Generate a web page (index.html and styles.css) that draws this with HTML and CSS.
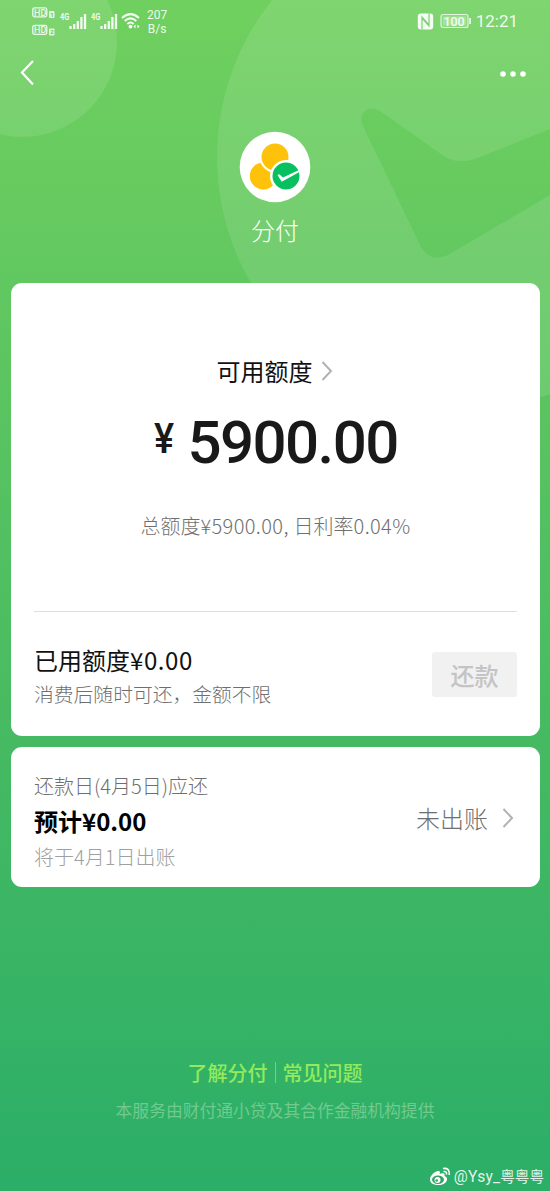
FILE: index.html
```html
<!DOCTYPE html>
<html lang="zh-CN">
<head>
<meta charset="utf-8">
<title>分付</title>
<link rel="stylesheet" href="styles.css">
</head>
<body>
<div class="screen">
  <svg class="backdrop" width="550" height="420" viewBox="0 0 550 420">
    <g fill="#fff" fill-opacity=".105">
      <circle cx="22" cy="42" r="95"/>
      <path fill-rule="evenodd" d="M217 157a251 251 0 0 1 502 0a251 251 0 0 1-502 0ZM380 111L438 152Q454 166 475 159L550 129V195L448 255Q431 263 421 247L363 126C357 112 369 105 380 111Z"/>
    </g>
  </svg>

  <header class="status">
    <div class="status-left">
      <svg width="24" height="30" viewBox="0 0 24 30">
        <g fill="none" stroke="#fff" stroke-opacity=".85" stroke-width="1.3"><rect x=".8" y=".8" width="14" height="9" rx="1.8"/><rect x=".8" y="18.3" width="14" height="9" rx="1.8"/></g>
        <g fill="#fff" fill-opacity=".8"><rect x="17" y="4" width="5.5" height="7" rx="1"/><rect x="17" y="21.5" width="5.5" height="7" rx="1"/></g>
        <g class="hd"><text x="2" y="8.6">HD</text><text x="2" y="26.1">HD</text></g>
        <g class="sim"><text x="18.2" y="9.7">1</text><text x="18.2" y="27.2">2</text></g>
      </svg>
      <svg width="28" height="20" viewBox="0 0 28 20">
        <text class="net" transform="scale(.78 1)" x="0" y="8.5">4G</text>
        <path d="M10.5 15v3M14.2 13v5M17.8 10v8M21.4 6v12M25 3v15" stroke="#fff" stroke-opacity=".9" stroke-width="2.3"/>
      </svg>
      <svg class="signal-two" width="28" height="20" viewBox="0 0 28 20">
        <text class="net" transform="scale(.78 1)" x="0" y="8.5">4G</text>
        <path d="M10.5 15v3M14.2 13v5M17.8 10v8M21.4 6v12M25 3v15" stroke="#fff" stroke-opacity=".9" stroke-width="2.3"/>
      </svg>
      <svg class="wifi" width="20" height="18" viewBox="0 0 20 18">
        <g fill="none" stroke="#fff" stroke-opacity=".9" stroke-width="2"><path d="M1 6Q9.5-1.8 18 6M3.7 9Q9.5 3.8 15.3 9M6.3 11.9Q9.5 9 12.7 11.9"/></g>
        <circle cx="9.5" cy="14.6" r="1.9" fill="#fff"/><path d="M12.5 14.5l2-2v4zM18.5 14.5l-2-2v4z" fill="#fff"/>
      </svg>
      <div class="speed"><span>207</span><span>B/s</span></div>
    </div>
    <div class="status-right">
      <svg width="17" height="17" viewBox="0 0 17 17"><rect x=".8" y=".5" width="15.4" height="16" rx="3" fill="#fff" fill-opacity=".92"/><path d="M5 16.5V4L11.500 11.500M12 .5V13L5.500 5.500" fill="none" stroke="#78d26c" stroke-width="1.2"/></svg>
      <svg class="battery" width="32" height="16" viewBox="0 0 32 16"><rect x="1" y="1.5" width="27" height="13" rx="2" fill="#fff" fill-opacity=".12" stroke="#fff" stroke-opacity=".75" stroke-width="1.2"/><rect x="3" y="3.5" width="23" height="9" fill="#fff" fill-opacity=".22"/><rect x="29.2" y="5" width="1.8" height="6" fill="#fff" fill-opacity=".8"/><text x="3.400" y="12.5">100</text></svg>
      <time>12:21</time>
    </div>
  </header>

  <nav class="nav">
    <svg width="18" height="28" viewBox="0 0 18 28"><path d="M14 2L3 13.5L14 25.5" fill="none" stroke="#fff" stroke-width="2.2"/></svg>
    <svg width="28" height="8" viewBox="0 0 28 8" fill="#fff"><circle cx="4" cy="4" r="2.8"/><circle cx="14" cy="4" r="2.8"/><circle cx="24" cy="4" r="2.8"/></svg>
  </nav>

  <section class="brand">
    <svg width="72" height="72" viewBox="0 0 72 72">
      <circle cx="36" cy="36" r="35.3" fill="#fff"/>
      <circle cx="24.3" cy="45" r="13.5" fill="#ffc20a"/>
      <circle cx="36" cy="26" r="15.5" fill="#fff"/><circle cx="36" cy="26" r="13.5" fill="#ffc20a"/>
      <circle cx="47" cy="45" r="16" fill="#fff"/><circle cx="47" cy="45" r="13.5" fill="#07c160"/>
      <path d="M38.5 44L42.7 50.7L60 41.3L60 39L44 46.5L40.2 43.2Z" fill="#fff"/>
    </svg>
    <h1>分付</h1>
  </section>

  <main class="cards">
    <section class="card credit">
      <div class="credit-title">可用额度<svg width="12" height="22" viewBox="0 0 12 22"><path d="M1.5 3L10 12L1.5 21" fill="none" stroke="#b2b2b2" stroke-width="2"/></svg></div>
      <div class="amount"><span class="yen">¥</span><span class="digits">5900.00</span></div>
      <p class="total">总额度<span class="num">¥5900.00, </span>日利率<span class="num">0.04%</span></p>
      <div class="used">
        <div><div class="used-title">已用额度<span>¥0.00</span></div><div class="used-note">消费后随时可还，金额不限</div></div>
        <button class="repay">还款</button>
      </div>
    </section>
    <section class="card bill">
      <div>
        <div class="due">还款日(4月5日)应还</div>
        <div class="estimate">预计<span>¥0.00</span></div>
        <div class="bill-date">将于4月1日出账</div>
      </div>
      <div class="bill-state">未出账<svg width="12" height="22" viewBox="0 0 12 22"><path d="M1.5 3L10 12L1.5 21" fill="none" stroke="#b2b2b2" stroke-width="2"/></svg></div>
    </section>
  </main>

  <footer class="footer">
    <div class="links"><span>了解分付</span><i></i><span>常见问题</span></div>
    <p>本服务由财付通小贷及其合作金融机构提供</p>
    <div class="watermark">
      <svg width="22" height="19" viewBox="0 0 22 19"><path d="M8.5 4C4 5.5 1 9.5 1 12.5C1 20 18 20 18 12C18 10 16.5 9.5 15.5 9C16.5 6 14 5.5 10.5 7C11.5 5 11 3.5 8.5 4Z" fill="#fff"/><ellipse cx="9" cy="12.7" rx="6" ry="4.2" fill="#35a266"/><circle cx="8.5" cy="13" r="3" fill="#fff"/><circle cx="7.7" cy="13.5" r="1.3" fill="#35a266"/><path d="M14 1.5Q21 .5 20.3 8M14.5 4.5Q18 4 17.5 7.5" fill="none" stroke="#fff" stroke-width="1.6"/></svg>
      <div><span class="handle">@Ysy_</span>粤粤粤</div>
    </div>
  </footer>
</div>
</body>
</html>
```
FILE: styles.css
```css
* { box-sizing: border-box; }
body { margin: 0; font-family: "Noto Sans CJK SC", sans-serif; }
h1, p { margin: 0; font-weight: 400; }
svg { display: block; flex: none; }
.screen { position: relative; width: 550px; height: 1191px; overflow: hidden; display: flex; flex-direction: column; background: linear-gradient(#70d05f 0, #62c860 270px, #46ba62 740px, #2bae68 1191px); }
.backdrop { position: absolute; inset: 0 auto auto 0; }
.status, .nav, .brand, .cards, .footer { position: relative; }
.status { height: 42px; display: flex; justify-content: space-between; padding: 7px 32px 0; color: rgba(255,255,255,.9); font-family: Roboto, sans-serif; }
.status-left { display: flex; align-items: flex-start; }
.status-left > svg + svg { margin-top: 4px; margin-left: 4px; }
.status-left > .signal-two { margin-left: 3px; }
.status-left > .wifi { margin-top: 5px; margin-left: 2px; }
.hd text { font: 500 9px Roboto, sans-serif; fill: #fff; fill-opacity: .85; }
.sim text { font: 700 6px Roboto, sans-serif; fill: #6abf5d; }
.net { font: 700 9.5px Roboto, sans-serif; fill: #fff; fill-opacity: .9; }
.speed { display: flex; flex-direction: column; align-items: center; margin-left: 6px; font-size: 12px; line-height: 14px; }
.speed span:first-child { margin-top: 1px; }
.status-right { display: flex; height: 28px; align-items: center; }
.battery { margin-left: 6px; }
.battery text { font: 500 12.5px Roboto, sans-serif; fill: #fff; fill-opacity: .9; }
time { font-size: 17px; margin-left: 4px; }
.nav { height: 60px; padding: 17px 23px 0 19px; display: flex; justify-content: space-between; }
.nav svg + svg { margin-top: 11px; }
.brand { height: 181px; display: flex; flex-direction: column; align-items: center; padding-top: 29px; color: #fff; }
.brand h1 { margin-top: 9px; font-size: 24px; line-height: 36px; font-weight: 300; }
.cards { display: flex; flex-direction: column; gap: 11px; padding: 0 10px 0 11px; }
.card { background: #fff; border-radius: 11px; }
.credit { height: 453px; padding: 69px 23px 0; display: flex; flex-direction: column; }
.credit-title { display: flex; align-items: center; justify-content: center; gap: 8px; height: 36px; padding-right: 2px; font-size: 24px; color: #111; }
.amount { height: 84px; margin-top: 13px; display: flex; justify-content: center; align-items: center; color: #191919; font-family: Roboto, sans-serif; font-weight: 500; }
.yen { font-size: 42px; line-height: 50px; margin: -8px 12px 0 0; transform: scaleX(.9); }
.digits { font-size: 60px; line-height: 84px; letter-spacing: -1.6px; }
.total { height: 127px; padding-top: 25px; text-align: center; font-size: 20px; line-height: 32px; font-weight: 300; color: #6f6f6f; border-bottom: 1px solid #dedede; white-space: nowrap; }
.total .num { letter-spacing: .38px; }
.used { display: flex; justify-content: space-between; align-items: flex-start; padding-top: 31px; }
.used-title { font-size: 24px; line-height: 34px; color: #111; white-space: nowrap; }
.used-title span { letter-spacing: .6px; }
.used-note { font-size: 19.8px; line-height: 34px; color: #6f6f6f; font-weight: 300; }
.repay { width: 85px; height: 45px; margin-top: 9px; padding: 0; border: 0; border-radius: 3px; background: #f1f1f1; color: #c4c4c4; font: 500 24px/45px "Noto Sans CJK SC", sans-serif; }
.bill { height: 140px; padding: 23px 23px 0; display: flex; justify-content: space-between; }
.due { font-size: 20px; line-height: 32px; color: #6f6f6f; font-weight: 300; }
.estimate { font-size: 24px; line-height: 38px; font-weight: 700; color: #000; }
.bill-date { font-size: 20px; line-height: 34px; color: #a0a0a0; font-weight: 300; }
.bill-state { display: flex; gap: 14px; align-items: center; height: 94px; padding-right: 3px; font-size: 24px; color: #6f6f6f; font-weight: 300; }
.footer { margin-top: 167px; display: flex; flex-direction: column; }
.links { height: 36px; display: flex; align-items: center; justify-content: center; gap: 7px; color: #93ea5c; font-size: 20px; font-weight: 500; }
.links i { width: 1px; height: 21px; background: #83ca7b; }
.footer p { margin-top: 7px; line-height: 26px; text-align: center; font-size: 16.8px; color: #71ca8e; }
.watermark { display: flex; align-items: center; justify-content: flex-end; gap: 3px; height: 26px; margin-top: 40px; padding-right: 6px; color: rgba(255,255,255,.88); font: 14.6px/26px "Noto Sans CJK SC", sans-serif; }
.handle { font: 15.6px/26px Roboto, sans-serif; letter-spacing: .2px; }
```
